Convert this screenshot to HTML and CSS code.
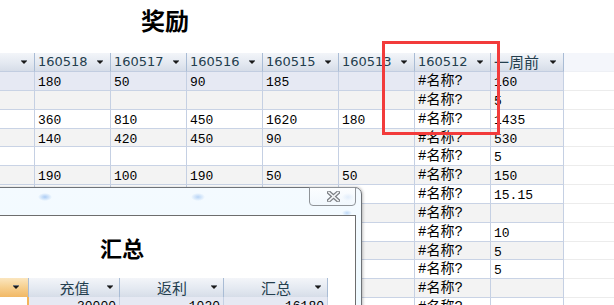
FILE: index.html
```html
<!DOCTYPE html>
<html lang="zh">
<head>
    <meta charset="UTF-8">
    <title>奖励</title>
    <link rel="stylesheet" href="styles.css">
</head>
<body>
    <div class="page">
        <h1 class="title">奖励</h1>

        <div class="sheet">
            <div class="row head">
                <div class="cell"><span></span><i class="arrow"></i></div>
                <div class="cell"><span>160518</span><i class="arrow"></i></div>
                <div class="cell"><span>160517</span><i class="arrow"></i></div>
                <div class="cell"><span>160516</span><i class="arrow"></i></div>
                <div class="cell"><span>160515</span><i class="arrow"></i></div>
                <div class="cell"><span>160513</span><i class="arrow"></i></div>
                <div class="cell"><span>160512</span><i class="arrow"></i></div>
                <div class="cell last"><span class="cjk">一周前</span><i class="arrow"></i></div>
                <div class="fill"></div>
            </div>
            <div class="row sel">
                <div class="cell"></div><div class="cell">180</div><div class="cell">50</div><div class="cell">90</div><div class="cell">185</div><div class="cell"></div><div class="cell err">#名称?</div><div class="cell last">160</div><div class="fill"></div>
            </div>
            <div class="row alt">
                <div class="cell"></div><div class="cell"></div><div class="cell"></div><div class="cell"></div><div class="cell"></div><div class="cell"></div><div class="cell err">#名称?</div><div class="cell last">5</div><div class="fill"></div>
            </div>
            <div class="row">
                <div class="cell"></div><div class="cell">360</div><div class="cell">810</div><div class="cell">450</div><div class="cell">1620</div><div class="cell">180</div><div class="cell err">#名称?</div><div class="cell last">1435</div><div class="fill"></div>
            </div>
            <div class="row alt">
                <div class="cell"></div><div class="cell">140</div><div class="cell">420</div><div class="cell">450</div><div class="cell">90</div><div class="cell"></div><div class="cell err">#名称?</div><div class="cell last">530</div><div class="fill"></div>
            </div>
            <div class="row">
                <div class="cell"></div><div class="cell"></div><div class="cell"></div><div class="cell"></div><div class="cell"></div><div class="cell"></div><div class="cell err">#名称?</div><div class="cell last">5</div><div class="fill"></div>
            </div>
            <div class="row alt">
                <div class="cell"></div><div class="cell">190</div><div class="cell">100</div><div class="cell">190</div><div class="cell">50</div><div class="cell">50</div><div class="cell err">#名称?</div><div class="cell last">150</div><div class="fill"></div>
            </div>
            <div class="row">
                <div class="cell"></div><div class="cell"></div><div class="cell"></div><div class="cell"></div><div class="cell"></div><div class="cell"></div><div class="cell err">#名称?</div><div class="cell last">15.15</div><div class="fill"></div>
            </div>
            <div class="row alt">
                <div class="cell"></div><div class="cell"></div><div class="cell"></div><div class="cell"></div><div class="cell"></div><div class="cell"></div><div class="cell err">#名称?</div><div class="cell last"></div><div class="fill"></div>
            </div>
            <div class="row">
                <div class="cell"></div><div class="cell"></div><div class="cell"></div><div class="cell"></div><div class="cell"></div><div class="cell"></div><div class="cell err">#名称?</div><div class="cell last">10</div><div class="fill"></div>
            </div>
            <div class="row alt">
                <div class="cell"></div><div class="cell"></div><div class="cell"></div><div class="cell"></div><div class="cell"></div><div class="cell"></div><div class="cell err">#名称?</div><div class="cell last">5</div><div class="fill"></div>
            </div>
            <div class="row">
                <div class="cell"></div><div class="cell"></div><div class="cell"></div><div class="cell"></div><div class="cell"></div><div class="cell"></div><div class="cell err">#名称?</div><div class="cell last">5</div><div class="fill"></div>
            </div>
            <div class="row alt">
                <div class="cell"></div><div class="cell"></div><div class="cell"></div><div class="cell"></div><div class="cell"></div><div class="cell"></div><div class="cell err">#名称?</div><div class="cell last"></div><div class="fill"></div>
            </div>
            <div class="row">
                <div class="cell"></div><div class="cell"></div><div class="cell"></div><div class="cell"></div><div class="cell"></div><div class="cell"></div><div class="cell err">#名称?</div><div class="cell last"></div><div class="fill"></div>
            </div>
        </div>

        <div class="mark"></div>

        <div class="dialog">
            <div class="dlg-bar">
                <div class="close">
                    <svg width="13" height="11" viewBox="0 0 13 11">
                        <path d="M2 1.5 L11 9.5 M11 1.5 L2 9.5" stroke="#7c7f84" stroke-width="4" stroke-linecap="square"/>
                        <path d="M2 1.5 L11 9.5 M11 1.5 L2 9.5" stroke="#f4f6f8" stroke-width="1.6" stroke-linecap="square"/>
                    </svg>
                </div>
            </div>
            <div class="dlg-body">
                <h2 class="sub-title">汇总</h2>
                <div class="mini">
                    <div class="mrow mhead">
                        <div class="mcell first"><i class="arrow"></i></div>
                        <div class="mcell c1"><span>充值</span><i class="arrow"></i></div>
                        <div class="mcell c2"><span>返利</span><i class="arrow"></i></div>
                        <div class="mcell c3"><span>汇总</span><i class="arrow"></i></div>
                    </div>
                    <div class="mrow mdata">
                        <div class="mcell first"></div>
                        <div class="mcell c1">30000</div>
                        <div class="mcell c2">1020</div>
                        <div class="mcell c3">16180</div>
                    </div>
                </div>
            </div>
        </div>
    </div>
</body>
</html>
```

FILE: styles.css
```css
* {
    margin: 0;
    padding: 0;
    box-sizing: border-box;
}

body {
    background: #ffffff;
    font-family: "Noto Sans CJK SC", sans-serif;
    overflow: hidden;
}

.page {
    position: relative;
    width: 614px;
    height: 305px;
    overflow: hidden;
}

.title {
    height: 53px;
    padding: 3px 0 0 141px;
    font-size: 24px;
    font-weight: 700;
    line-height: 34px;
    color: #000;
}

/* main sheet */
.sheet {
    margin-left: -41px;
}

.row {
    display: flex;
    height: 18.85px;
    background: #ffffff;
}

.row.alt { background: #f3f3f3; }
.row.sel { background: #e6e9f3; }

.cell {
    width: 76px;
    flex-shrink: 0;
    border-right: 1px solid #c5d0e3;
    border-bottom: 1px solid #c9d3e5;
    padding: 3px 0 0 3px;
    font-family: "Liberation Mono", "Noto Sans CJK SC", monospace;
    font-size: 13px;
    line-height: 15px;
    color: #000;
    white-space: nowrap;
    overflow: hidden;
}

.cell.last { width: 73px; }

.cell.err {
    font-size: 14px;
    padding-top: 2px;
}

.fill {
    flex: 1;
    border-bottom: 1px solid #ececec;
    background: #ffffff;
}

.row.head {
    height: 19px;
}

.head .cell {
    display: flex;
    align-items: center;
    justify-content: space-between;
    padding: 0 7px 0 3px;
    background: linear-gradient(#f3f5f9, #e4e9f1 55%, #d6dde8);
    border-right: 1px solid #a9bcd5;
    border-bottom: 1px solid #c2cde0;
    font-family: "DejaVu Sans", "Noto Sans CJK SC", sans-serif;
    font-size: 13px;
    line-height: 18px;
    color: #243e4e;
}

.head .cjk {
    font-family: "Noto Sans CJK SC", sans-serif;
    font-size: 15px;
    line-height: 16px;
}

.head .fill {
    background: #f4f6fb;
    border-bottom: 1px solid #eef0f5;
}

.arrow {
    display: block;
    width: 0;
    height: 0;
    border-left: 3px solid transparent;
    border-right: 3px solid transparent;
    border-top: 3px solid #1a1a1a;
    box-shadow: 0 -1px 0 #6d737a;
}

/* highlighted column */
.mark {
    position: absolute;
    left: 382px;
    top: 41px;
    width: 118px;
    height: 94px;
    border: 3px solid #f23b3b;
}

/* popup window */
.dialog {
    position: absolute;
    left: -10px;
    top: 187px;
    width: 372px;
    height: 140px;
    border: 1px solid #6e7277;
    border-radius: 0 7px 0 0;
    background:
        radial-gradient(ellipse 7px 4px at 54px 9px, rgba(110, 165, 235, 0.55), transparent),
        radial-gradient(ellipse 7px 4px at 207px 9px, rgba(110, 165, 235, 0.45), transparent),
        radial-gradient(ellipse 6px 4px at 357px 9px, rgba(110, 165, 235, 0.5), transparent),
        radial-gradient(ellipse 5px 3px at 356px 25px, rgba(110, 165, 235, 0.4), transparent),
        linear-gradient(#f4faff, #eefaff);
    box-shadow: 1px 0 3px rgba(0, 0, 0, 0.25);
}

.dlg-bar {
    height: 27px;
    display: flex;
    justify-content: flex-end;
    align-items: flex-start;
    padding-right: 5px;
}

.close {
    width: 47px;
    height: 19px;
    margin-top: -1px;
    border: 1px solid #8f9398;
    border-radius: 0 0 4px 4px;
    background: linear-gradient(rgba(255, 255, 255, 0.7), rgba(240, 246, 252, 0.7));
    display: flex;
    align-items: center;
    justify-content: center;
    padding-left: 2px;
}

.dlg-body {
    margin-right: 5px;
    height: 120px;
    background: #ffffff;
    border-top: 1px solid #6d6d6d;
    border-right: 1px solid #6d6d6d;
}

.sub-title {
    padding: 16px 0 0 109px;
    height: 62px;
    font-size: 22px;
    font-weight: 700;
    line-height: 30px;
    color: #000;
}

.mrow {
    display: flex;
}

.mcell {
    height: 19px;
    flex-shrink: 0;
    border-right: 1px solid #a9bcd5;
    font-size: 15px;
    line-height: 19px;
}

.mcell.first { width: 38px; }
.mcell.c1 { width: 91px; }
.mcell.c2 { width: 104px; }
.mcell.c3 { width: 104px; }

.mhead .mcell {
    display: flex;
    align-items: center;
    justify-content: space-between;
    padding: 0 6px 0 13px;
    background: linear-gradient(#f3f5f9, #e4e9f1 55%, #d6dde8);
    color: #243e4e;
}

.mhead .mcell span {
    flex: 1;
    text-align: center;
}

.mhead .mcell.first {
    justify-content: flex-end;
    padding-right: 9px;
    background: linear-gradient(#fbe6bf, #f6cf8e 50%, #f1b865);
    border-right: 1px solid #a9bcd5;
}

.mdata .mcell {
    background: #e6e9f3;
    text-align: right;
    padding-right: 3px;
    font-family: "Liberation Mono", monospace;
    font-size: 13px;
    border-right: 1px solid #c5d0e3;
}

.mdata .mcell.first {
    background: #ffffff;
    border-right: 2px solid #f3b45a;
}
```
